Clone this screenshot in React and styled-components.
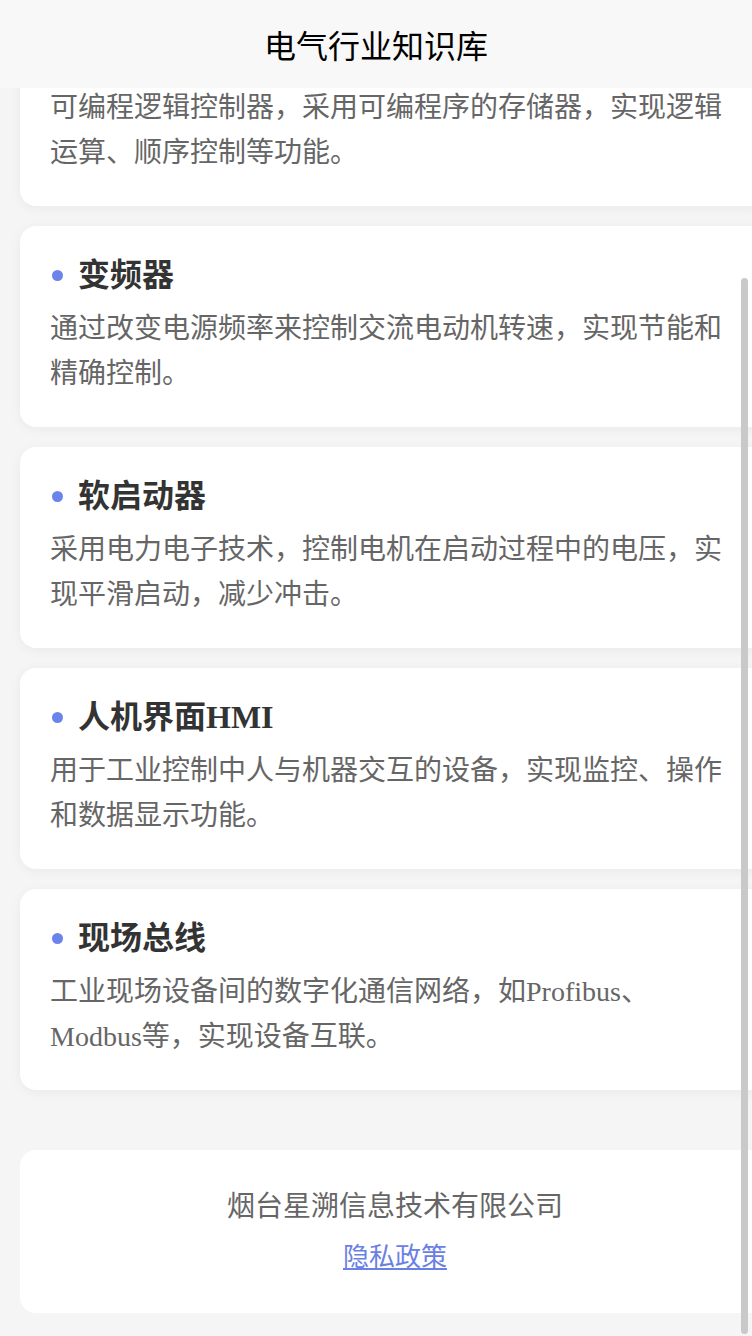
import React, { useLayoutEffect, useRef } from "react";
import styled, { createGlobalStyle } from "styled-components";

const GlobalStyle = createGlobalStyle`
  * { box-sizing: border-box; }
  html, body { margin: 0; padding: 0; height: 100%; }
  body {
    background: #f5f5f5;
    font-family: "Liberation Serif", "Noto Sans CJK SC", serif;
    overflow: hidden;
  }
`;

const items = [
  {
    title: "继电器",
    desc: "利用电磁原理实现电路通断控制的自动开关元件，广泛用于控制和保护电路。",
  },
  {
    title: "PLC",
    desc: "可编程逻辑控制器，采用可编程序的存储器，实现逻辑运算、顺序控制等功能。",
  },
  {
    title: "变频器",
    desc: "通过改变电源频率来控制交流电动机转速，实现节能和精确控制。",
  },
  {
    title: "软启动器",
    desc: "采用电力电子技术，控制电机在启动过程中的电压，实现平滑启动，减少冲击。",
  },
  {
    title: "人机界面HMI",
    desc: "用于工业控制中人与机器交互的设备，实现监控、操作和数据显示功能。",
  },
  {
    title: "现场总线",
    desc: "工业现场设备间的数字化通信网络，如Profibus、Modbus等，实现设备互联。",
  },
];

export default function App() {
  const scrollRef = useRef(null);

  // the list is shown scrolled to its end
  useLayoutEffect(() => {
    const el = scrollRef.current;
    if (el) el.scrollTop = el.scrollHeight;
  }, []);

  return (
    <Page>
      <GlobalStyle />
      <Header>电气行业知识库</Header>
      <Scroller ref={scrollRef}>
        <Content>
          <CardList>
            {items.map(({ title, desc }) => (
              <Card key={title}>
                <CardTitle>
                  <Dot />
                  {title}
                </CardTitle>
                <Desc>{desc}</Desc>
              </Card>
            ))}
          </CardList>
          <Footer>
            <Company>烟台星溯信息技术有限公司</Company>
            <PolicyLink href="#privacy">隐私政策</PolicyLink>
          </Footer>
        </Content>
      </Scroller>
      <ScrollThumb />
    </Page>
  );
}

const Page = styled.div`
  display: flex;
  flex-direction: column;
  height: 100vh;
  background: #f5f5f5;
`;

const Header = styled.header`
  flex-shrink: 0;
  height: 88px;
  display: flex;
  align-items: center;
  justify-content: center;
  background: #f8f8f8;
  color: #000;
  font-size: 32px;
  font-weight: 400;
`;

const Scroller = styled.main`
  flex: 1;
  overflow: hidden;
`;

const Content = styled.div`
  padding: 20px 0 23px 20px;
`;

const CardList = styled.div`
  display: flex;
  flex-direction: column;
  gap: 20px;
`;

const Card = styled.section`
  width: 750px;
  padding: 30px 34px 30px 30px;
  background: #fff;
  border-radius: 16px;
  box-shadow: 0 2px 12px rgba(0, 0, 0, 0.05);
`;

const CardTitle = styled.h3`
  display: flex;
  align-items: center;
  margin: 0 0 13px;
  font-size: 32px;
  line-height: 1.2;
  font-weight: 700;
  color: #333;
`;

const Dot = styled.span`
  width: 11px;
  height: 11px;
  margin: 0 15px 0 2px;
  border-radius: 50%;
  background: #6b84ec;
  flex-shrink: 0;
`;

const Desc = styled.p`
  margin: 0;
  font-size: 28px;
  line-height: 1.6;
  color: #666;
`;

const Footer = styled.footer`
  width: 750px;
  margin-top: 60px;
  padding: 40px 0;
  display: flex;
  flex-direction: column;
  align-items: center;
  background: #fff;
  border-radius: 16px;
`;

const Company = styled.div`
  font-size: 28px;
  line-height: 1.2;
  color: #666;
`;

const PolicyLink = styled.a`
  margin-top: 18px;
  font-size: 26px;
  line-height: 1.2;
  color: #6b80e4;
  text-decoration: underline;
`;

const ScrollThumb = styled.div`
  position: fixed;
  top: 278px;
  bottom: 2px;
  right: 4px;
  width: 7px;
  border-radius: 4px;
  background: #c9c9c9;
`;
